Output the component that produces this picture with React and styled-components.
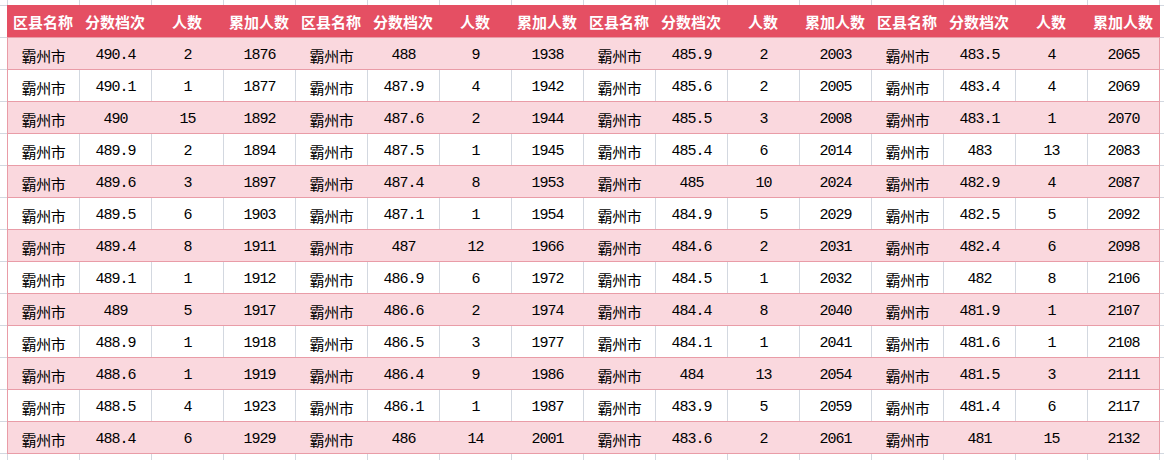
import React from 'react';
import styled, { createGlobalStyle } from 'styled-components';

const GlobalStyle = createGlobalStyle`
  html, body {
    margin: 0;
    padding: 0;
    background: #fff;
  }
`;

const GRID = '#d3d8e0';
const HEAD = '#e54f63';
const PINK = '#fad8de';
const PINK_LINE = '#e99ca7';

const Sheet = styled.div`
  min-height: 460px;
  box-sizing: border-box;
  padding: 5px 0 0 7px;
  background-color: #fff;
  background-image: linear-gradient(to right, ${GRID} 1px, transparent 1px),
    linear-gradient(to bottom, ${GRID} 1px, transparent 1px);
  background-size: 72px 32px;
  background-position: 7px 5px;
`;

const Table = styled.div`
  display: inline-flex;
  flex-direction: column;
  border-bottom: 1px solid ${PINK_LINE};
`;

const HeadRow = styled.div`
  display: flex;
  height: 32px;
  background: ${HEAD};
  border-right: 1px solid ${HEAD};
`;

const Row = styled.div`
  display: flex;
  box-sizing: border-box;
  height: 32px;
  border-top: 1px solid ${PINK_LINE};
  border-right: 1px solid ${PINK_LINE};
  background: ${(p) => (p.$striped ? PINK : '#fff')};
`;

const HeadCell = styled.div`
  width: 72px;
  flex: none;
  text-align: center;
  line-height: 30px;
  padding-top: 2px;
  box-sizing: border-box;
  color: #fff;
  font-family: 'Noto Sans CJK SC', sans-serif;
  font-weight: 700;
  font-size: 15px;
  white-space: nowrap;
`;

const Cell = styled.div`
  width: 72px;
  flex: none;
  box-sizing: border-box;
  border-left: 1px solid ${(p) => (p.$striped ? 'transparent' : GRID)};
  &:first-child {
    border-left-color: ${PINK_LINE};
  }
  text-align: center;
  line-height: 29px;
  padding-top: 3px;
  color: #000;
  white-space: nowrap;
  font-family: ${(p) =>
    p.$name
      ? "'Noto Sans CJK SC', sans-serif"
      : "'Liberation Mono', 'Noto Sans CJK SC', monospace"};
  font-size: 15px;
  letter-spacing: ${(p) => (p.$name ? '-0.3px' : '-1px')};
`;

const groups = [
  [
    ['490.4', 2, 1876], ['490.1', 1, 1877], ['490', 15, 1892], ['489.9', 2, 1894],
    ['489.6', 3, 1897], ['489.5', 6, 1903], ['489.4', 8, 1911], ['489.1', 1, 1912],
    ['489', 5, 1917], ['488.9', 1, 1918], ['488.6', 1, 1919], ['488.5', 4, 1923],
    ['488.4', 6, 1929],
  ],
  [
    ['488', 9, 1938], ['487.9', 4, 1942], ['487.6', 2, 1944], ['487.5', 1, 1945],
    ['487.4', 8, 1953], ['487.1', 1, 1954], ['487', 12, 1966], ['486.9', 6, 1972],
    ['486.6', 2, 1974], ['486.5', 3, 1977], ['486.4', 9, 1986], ['486.1', 1, 1987],
    ['486', 14, 2001],
  ],
  [
    ['485.9', 2, 2003], ['485.6', 2, 2005], ['485.5', 3, 2008], ['485.4', 6, 2014],
    ['485', 10, 2024], ['484.9', 5, 2029], ['484.6', 2, 2031], ['484.5', 1, 2032],
    ['484.4', 8, 2040], ['484.1', 1, 2041], ['484', 13, 2054], ['483.9', 5, 2059],
    ['483.6', 2, 2061],
  ],
  [
    ['483.5', 4, 2065], ['483.4', 4, 2069], ['483.1', 1, 2070], ['483', 13, 2083],
    ['482.9', 4, 2087], ['482.5', 5, 2092], ['482.4', 6, 2098], ['482', 8, 2106],
    ['481.9', 1, 2107], ['481.6', 1, 2108], ['481.5', 3, 2111], ['481.4', 6, 2117],
    ['481', 15, 2132],
  ],
];

const headers = ['区县名称', '分数档次', '人数', '累加人数'];

const App = () => {
  const rows = groups[0].map((_, i) => groups.map((g) => g[i]));

  return (
    <>
      <GlobalStyle />
      <Sheet>
        <Table>
          <HeadRow>
            {groups.map((_, g) =>
              headers.map((h) => <HeadCell key={`${g}-${h}`}>{h}</HeadCell>)
            )}
          </HeadRow>
          {rows.map((row, i) => {
            const striped = i % 2 === 0;
            return (
              <Row key={i} $striped={striped}>
                {row.map(([score, count, total], g) => (
                  <React.Fragment key={g}>
                    <Cell $striped={striped} $name>霸州市</Cell>
                    <Cell $striped={striped}>{score}</Cell>
                    <Cell $striped={striped}>{count}</Cell>
                    <Cell $striped={striped}>{total}</Cell>
                  </React.Fragment>
                ))}
              </Row>
            );
          })}
        </Table>
      </Sheet>
    </>
  );
};

export default App;
